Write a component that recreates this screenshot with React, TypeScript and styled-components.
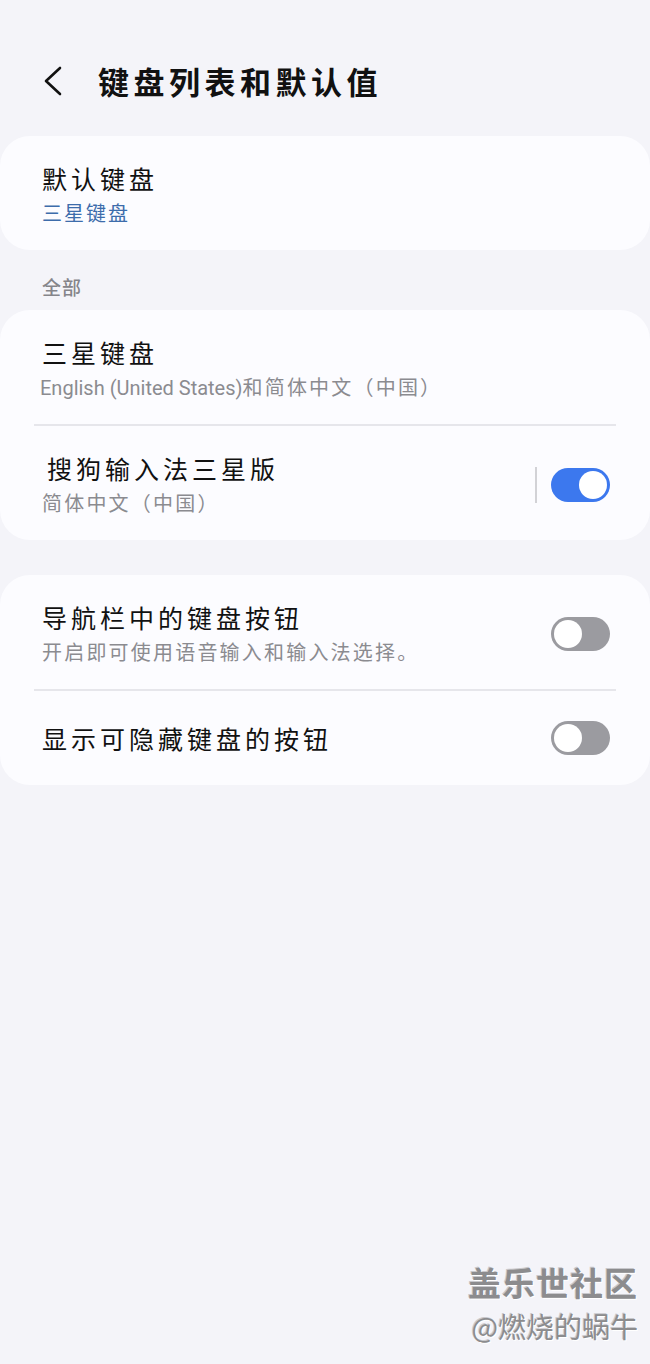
import React from "react";
import styled, { createGlobalStyle } from "styled-components";

const Global = createGlobalStyle`
  html, body { margin: 0; padding: 0; background: #f4f4f9; }
  body { font-family: Roboto, "Noto Sans CJK SC", "Noto Sans", sans-serif; }
`;

const Page = styled.div`
  position: relative;
  width: 650px;
  min-height: 1364px;
  background: #f4f4f9;
  overflow: hidden;
`;

const Header = styled.div`
  display: flex;
  align-items: center;
  height: 82px;
  padding: 40px 0 14px 42px;
  gap: 34px;
`;

const BackIcon = styled.svg`
  width: 22px;
  height: 30px;
  display: block;
`;

const Title = styled.h1`
  margin: 0;
  font-family: "Noto Sans CJK SC", sans-serif;
  font-size: 31px;
  font-weight: 700;
  letter-spacing: 4.5px;
  color: #111;
  line-height: 40px;
`;

const Card = styled.div`
  background: #fcfcff;
  border-radius: 30px;
  display: flex;
  flex-direction: column;
`;

const Row = styled.div<{ $single?: boolean }>`
  display: flex;
  align-items: center;
  padding: ${(p) => (p.$single ? "30px 40px 30px 42px" : "25px 40px 22px 42px")};
`;

const Texts = styled.div`
  flex: 1;
  display: flex;
  flex-direction: column;
`;

const RowTitle = styled.div<{ $indent?: number }>`
  font-family: "Noto Sans CJK SC", sans-serif;
  font-size: 25px;
  letter-spacing: 4px;
  line-height: 34px;
  height: 34px;
  color: #111;
  padding-left: ${(p) => p.$indent ?? 0}px;
`;

const RowSub = styled.div<{ $blue?: boolean }>`
  margin-top: 5px;
  font-family: Roboto, "Noto Sans CJK SC", sans-serif;
  font-size: 20px;
  letter-spacing: ${(p) => (p.$blue ? "2px" : "2.2px")};
  line-height: 28px;
  height: 28px;
  color: ${(p) => (p.$blue ? "#3d6cab" : "#8b8b90")};
  white-space: nowrap;
`;

const EnText = styled.span`
  letter-spacing: 0;
  margin-left: -2px;
`;

const Divider = styled.div`
  height: 2px;
  background: #e6e6eb;
  margin: 0 34px;
`;

const VLine = styled.div`
  width: 2px;
  height: 36px;
  background: #d2d2d6;
  margin-right: 14px;
`;

const Track = styled.div<{ $on?: boolean }>`
  width: 59px;
  height: 34px;
  border-radius: 17px;
  box-sizing: border-box;
  background: ${(p) => (p.$on ? "#3c78ee" : "#9b9ba0")};
  display: flex;
  align-items: center;
  justify-content: ${(p) => (p.$on ? "flex-end" : "flex-start")};
  padding: 0 3px;
`;

const Knob = styled.div`
  width: 28px;
  height: 28px;
  border-radius: 50%;
  background: #fff;
`;

const Section = styled.div`
  font-family: "Noto Sans CJK SC", sans-serif;
  font-size: 19px;
  font-weight: 500;
  letter-spacing: 1px;
  color: #85858a;
  line-height: 24px;
  padding: 25px 42px 11px;
`;

const Gap = styled.div`
  height: 35px;
`;

const Watermark = styled.div`
  position: absolute;
  right: 12px;
  top: 1261px;
  display: flex;
  flex-direction: column;
  align-items: flex-end;
  font-family: "Noto Sans CJK SC", sans-serif;
  color: #8c8c8e;
  text-shadow: 1px 1px 0 #fff, -1px -1px 0 #c8c8cc;
`;

const WmMain = styled.div`
  font-size: 33px;
  font-weight: 700;
  line-height: 42px;
  letter-spacing: 1px;
`;

const WmSub = styled.div`
  font-size: 28px;
  line-height: 38px;
  margin-top: 4px;
`;

const Toggle = ({ on }: { on?: boolean }) => (
  <Track $on={on}>
    <Knob />
  </Track>
);

export default function App() {
  return (
    <Page>
      <Global />
      <Header>
        <BackIcon viewBox="0 0 22 30">
          <polyline
            points="18,2 4,15 18,28"
            fill="none"
            stroke="#111"
            strokeWidth="2.6"
            strokeLinecap="round"
            strokeLinejoin="round"
          />
        </BackIcon>
        <Title>键盘列表和默认值</Title>
      </Header>

      <Card>
        <Row>
          <Texts>
            <RowTitle>默认键盘</RowTitle>
            <RowSub $blue>三星键盘</RowSub>
          </Texts>
        </Row>
      </Card>

      <Section>全部</Section>

      <Card>
        <Row>
          <Texts>
            <RowTitle>三星键盘</RowTitle>
            <RowSub>
              <EnText>English (United States)</EnText>和简体中文（中国）
            </RowSub>
          </Texts>
        </Row>
        <Divider />
        <Row>
          <Texts>
            <RowTitle $indent={5}>搜狗输入法三星版</RowTitle>
            <RowSub>简体中文（中国）</RowSub>
          </Texts>
          <VLine />
          <Toggle on />
        </Row>
      </Card>

      <Gap />

      <Card>
        <Row>
          <Texts>
            <RowTitle>导航栏中的键盘按钮</RowTitle>
            <RowSub>开启即可使用语音输入和输入法选择。</RowSub>
          </Texts>
          <Toggle />
        </Row>
        <Divider />
        <Row $single>
          <Texts>
            <RowTitle>显示可隐藏键盘的按钮</RowTitle>
          </Texts>
          <Toggle />
        </Row>
      </Card>

      <Watermark>
        <WmMain>盖乐世社区</WmMain>
        <WmSub>@燃烧的蜗牛</WmSub>
      </Watermark>
    </Page>
  );
}
